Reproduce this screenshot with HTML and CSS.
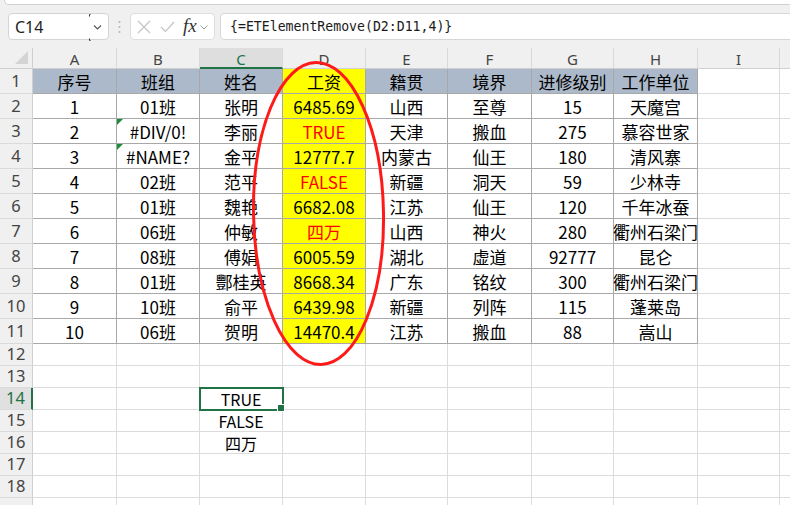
FILE: index.html
```html
<!DOCTYPE html>
<html lang="zh-CN">
<head>
<meta charset="utf-8">
<title>ETElementRemove</title>
<link rel="stylesheet" href="styles.css">
</head>
<body>
<div class="app">
  <div class="topstrip"></div>
  <div class="fbar">
    <div class="namebox">
      <span class="ref">C14</span>
      <span class="nb-drop">
        <svg width="19" height="27" viewBox="0 0 19 27">
          <path d="M1.5 0.5 H0.5 V2.5 M0.5 24.5 V26.5 H1.5" fill="none" stroke="#333" stroke-width="1"/>
          <path d="M5 11.5 L8.5 15 L12 11.5" fill="none" stroke="#555" stroke-width="1.1"/>
        </svg>
      </span>
    </div>
    <div class="sep">
      <svg width="3" height="14" viewBox="0 0 3 14"><circle cx="1.5" cy="2" r="1" fill="#b5b5b5"/><circle cx="1.5" cy="7" r="1" fill="#b5b5b5"/><circle cx="1.5" cy="12" r="1" fill="#b5b5b5"/></svg>
    </div>
    <div class="fxbox">
      <svg class="ic-x" width="14" height="14" viewBox="0 0 14 14"><path d="M1 1 L13 13 M13 1 L1 13" stroke="#c4c4c4" stroke-width="1.2" fill="none"/></svg>
      <svg class="ic-ok" width="15" height="12" viewBox="0 0 15 12"><path d="M1 6 L5.5 10.5 L14 1" stroke="#c4c4c4" stroke-width="1.2" fill="none"/></svg>
      <span class="fx">fx</span>
      <svg class="ic-dd" width="8" height="5" viewBox="0 0 8 5"><path d="M0.5 0.5 L4 4 L7.5 0.5" stroke="#9a9a9a" stroke-width="1" fill="none"/></svg>
    </div>
    <div class="formula">{=ETElementRemove(D2:D11,4)}</div>
  </div>

  <div class="sheet">
    <div class="row hrow">
      <div class="corner"><svg width="14" height="14" viewBox="0 0 14 14"><path d="M13 0 V13 H0 Z" fill="#d4d4d4"/></svg></div>
      <div class="ch">A</div><div class="ch">B</div><div class="ch sel">C</div><div class="ch">D</div><div class="ch">E</div><div class="ch">F</div><div class="ch">G</div><div class="ch">H</div><div class="ch">I</div><div class="ch"></div>
    </div>

    <div class="row r25">
      <div class="rh">1</div>
      <div class="c t hd">序号</div><div class="c t hd">班组</div><div class="c t hd">姓名</div><div class="c t y">工资</div><div class="c t hd">籍贯</div><div class="c t hd">境界</div><div class="c t hd">进修级别</div><div class="c t hd">工作单位</div><div class="c"></div><div class="c"></div>
    </div>
    <div class="row r25">
      <div class="rh">2</div>
      <div class="c t">1</div><div class="c t">01班</div><div class="c t">张明</div><div class="c t y">6485.69</div><div class="c t">山西</div><div class="c t">至尊</div><div class="c t">15</div><div class="c t">天魔宫</div><div class="c"></div><div class="c"></div>
    </div>
    <div class="row r25">
      <div class="rh">3</div>
      <div class="c t">2</div><div class="c t err">#DIV/0!</div><div class="c t">李丽</div><div class="c t y red">TRUE</div><div class="c t">天津</div><div class="c t">搬血</div><div class="c t">275</div><div class="c t">慕容世家</div><div class="c"></div><div class="c"></div>
    </div>
    <div class="row r25">
      <div class="rh">4</div>
      <div class="c t">3</div><div class="c t err">#NAME?</div><div class="c t">金平</div><div class="c t y">12777.7</div><div class="c t">内蒙古</div><div class="c t">仙王</div><div class="c t">180</div><div class="c t">清风寨</div><div class="c"></div><div class="c"></div>
    </div>
    <div class="row r25">
      <div class="rh">5</div>
      <div class="c t">4</div><div class="c t">02班</div><div class="c t">范平</div><div class="c t y red">FALSE</div><div class="c t">新疆</div><div class="c t">洞天</div><div class="c t">59</div><div class="c t">少林寺</div><div class="c"></div><div class="c"></div>
    </div>
    <div class="row r25">
      <div class="rh">6</div>
      <div class="c t">5</div><div class="c t">01班</div><div class="c t">魏艳</div><div class="c t y">6682.08</div><div class="c t">江苏</div><div class="c t">仙王</div><div class="c t">120</div><div class="c t">千年冰蚕</div><div class="c"></div><div class="c"></div>
    </div>
    <div class="row r25">
      <div class="rh">7</div>
      <div class="c t">6</div><div class="c t">06班</div><div class="c t">仲敏</div><div class="c t y red">四万</div><div class="c t">山西</div><div class="c t">神火</div><div class="c t">280</div><div class="c t">衢州石梁门</div><div class="c"></div><div class="c"></div>
    </div>
    <div class="row r25">
      <div class="rh">8</div>
      <div class="c t">7</div><div class="c t">08班</div><div class="c t">傅娟</div><div class="c t y">6005.59</div><div class="c t">湖北</div><div class="c t">虚道</div><div class="c t">92777</div><div class="c t">昆仑</div><div class="c"></div><div class="c"></div>
    </div>
    <div class="row r25">
      <div class="rh">9</div>
      <div class="c t">8</div><div class="c t">01班</div><div class="c t">酆桂英</div><div class="c t y">8668.34</div><div class="c t">广东</div><div class="c t">铭纹</div><div class="c t">300</div><div class="c t">衢州石梁门</div><div class="c"></div><div class="c"></div>
    </div>
    <div class="row r25">
      <div class="rh">10</div>
      <div class="c t">9</div><div class="c t">10班</div><div class="c t">俞平</div><div class="c t y">6439.98</div><div class="c t">新疆</div><div class="c t">列阵</div><div class="c t">115</div><div class="c t">蓬莱岛</div><div class="c"></div><div class="c"></div>
    </div>
    <div class="row r25">
      <div class="rh">11</div>
      <div class="c t">10</div><div class="c t">06班</div><div class="c t">贺明</div><div class="c t y">14470.4</div><div class="c t">江苏</div><div class="c t">搬血</div><div class="c t">88</div><div class="c t">嵩山</div><div class="c"></div><div class="c"></div>
    </div>

    <div class="row r22">
      <div class="rh">12</div>
      <div class="c"></div><div class="c"></div><div class="c"></div><div class="c"></div><div class="c"></div><div class="c"></div><div class="c"></div><div class="c"></div><div class="c"></div><div class="c"></div>
    </div>
    <div class="row r22">
      <div class="rh">13</div>
      <div class="c"></div><div class="c"></div><div class="c"></div><div class="c"></div><div class="c"></div><div class="c"></div><div class="c"></div><div class="c"></div><div class="c"></div><div class="c"></div>
    </div>
    <div class="row r22">
      <div class="rh sel">14</div>
      <div class="c"></div><div class="c"></div><div class="c s active">TRUE</div><div class="c"></div><div class="c"></div><div class="c"></div><div class="c"></div><div class="c"></div><div class="c"></div><div class="c"></div>
    </div>
    <div class="row r22">
      <div class="rh">15</div>
      <div class="c"></div><div class="c"></div><div class="c s">FALSE</div><div class="c"></div><div class="c"></div><div class="c"></div><div class="c"></div><div class="c"></div><div class="c"></div><div class="c"></div>
    </div>
    <div class="row r22">
      <div class="rh">16</div>
      <div class="c"></div><div class="c"></div><div class="c s">四万</div><div class="c"></div><div class="c"></div><div class="c"></div><div class="c"></div><div class="c"></div><div class="c"></div><div class="c"></div>
    </div>
    <div class="row r22">
      <div class="rh">17</div>
      <div class="c"></div><div class="c"></div><div class="c"></div><div class="c"></div><div class="c"></div><div class="c"></div><div class="c"></div><div class="c"></div><div class="c"></div><div class="c"></div>
    </div>
    <div class="row r22">
      <div class="rh">18</div>
      <div class="c"></div><div class="c"></div><div class="c"></div><div class="c"></div><div class="c"></div><div class="c"></div><div class="c"></div><div class="c"></div><div class="c"></div><div class="c"></div>
    </div>
    <div class="row r22">
      <div class="rh"></div>
      <div class="c"></div><div class="c"></div><div class="c"></div><div class="c"></div><div class="c"></div><div class="c"></div><div class="c"></div><div class="c"></div><div class="c"></div><div class="c"></div>
    </div>
  </div>

  <svg class="mark" width="790" height="505" viewBox="0 0 790 505">
    <ellipse cx="318.5" cy="213.5" rx="65" ry="151" transform="rotate(-1 318.5 213.5)" fill="none" stroke="#ff1a1a" stroke-width="3"/>
  </svg>
</div>
</body>
</html>
```

FILE: styles.css
```css
* { box-sizing: border-box; margin: 0; padding: 0; }

html, body {
  width: 790px;
  height: 505px;
  overflow: hidden;
  background: #ffffff;
}

body {
  font-family: "Noto Sans CJK SC", "Noto Sans", sans-serif;
}

.app {
  position: relative;
  width: 790px;
  height: 505px;
  overflow: hidden;
  background: #f0f0f0;
}

/* ---------- formula bar ---------- */
.topstrip {
  height: 5px;
  margin-left: 4px;
  background: #ffffff;
  border-left: 1px solid #d2d2d2;
  border-bottom: 1px solid #d2d2d2;
  border-bottom-left-radius: 6px;
}

.fbar {
  display: flex;
  align-items: center;
  height: 27px;
  margin-top: 8px;
}

.namebox {
  margin-left: 8px;
  width: 101px;
  height: 27px;
  background: #ffffff;
  border: 1px solid #d4d4d4;
  border-radius: 4px;
  display: flex;
  align-items: center;
  justify-content: space-between;
  padding-left: 6px;
}

.ref {
  font-family: "Noto Sans", sans-serif;
  font-size: 16px;
  color: #222;
  line-height: 1;
}

.nb-drop {
  display: flex;
  width: 19px;
  height: 25px;
  margin-top: -1px;
  overflow: visible;
}

.sep {
  display: flex;
  margin-left: 9px;
  width: 3px;
}

.fxbox {
  margin-left: 9px;
  width: 85px;
  height: 27px;
  background: #ffffff;
  border: 1px solid #dedede;
  border-radius: 4px;
  display: flex;
  align-items: center;
  padding-left: 6px;
}

.ic-x { margin-right: 9px; }
.ic-ok { margin-right: 8px; }

.fx {
  font-family: "Liberation Serif", "DejaVu Serif", serif;
  font-style: italic;
  font-size: 19px;
  color: #333;
  line-height: 1;
  margin-top: -3px;
  margin-right: 3px;
}

.ic-dd { margin-top: 1px; }

.formula {
  margin-left: 5px;
  flex: 1 0 auto;
  height: 27px;
  margin-right: -20px;
  background: #ffffff;
  border: 1px solid #d6d6d6;
  border-radius: 4px;
  font-family: "DejaVu Sans Mono", "Liberation Mono", monospace;
  font-size: 13.2px;
  color: #1a1a1a;
  display: flex;
  align-items: center;
  padding-left: 9px;
  white-space: nowrap;
}

/* ---------- sheet ---------- */
.sheet {
  margin-top: 8px;
  background: #ffffff;
}

.row {
  display: grid;
  grid-template-columns: 33px 84px 83px 83px 83px 82px 84px 82px 84px 82px 84px;
}

.hrow { height: 21px; background: #f0f0f0; }
.r25 { height: 25px; }
.r22 { height: 22px; }

.corner {
  background: #f0f0f0;
  border-right: 1px solid #cfcfcf;
  border-bottom: 1px solid #cfcfcf;
  display: flex;
  align-items: flex-end;
  justify-content: flex-end;
  padding: 0 3px 3px 0;
}

.ch {
  background: #f0f0f0;
  border-right: 1px solid #d9d9d9;
  border-bottom: 1px solid #cfcfcf;
  font-family: "Noto Sans", sans-serif;
  font-size: 15px;
  color: #444;
  line-height: 1;
  display: flex;
  align-items: center;
  justify-content: center;
  padding-top: 3px;
}

.ch.sel {
  background: #dedede;
  border-bottom: 2px solid #217346;
  color: #217346;
}

.rh {
  background: #f0f0f0;
  border-right: 1px solid #cfcfcf;
  border-bottom: 1px solid #dadada;
  font-family: "Noto Sans", sans-serif;
  font-size: 16.5px;
  color: #444;
  line-height: 1;
  display: flex;
  align-items: center;
  justify-content: center;
}

.rh.sel {
  background: #e0e0e0;
  border-right: 2px solid #217346;
  color: #217346;
}

.c {
  position: relative;
  border-right: 1px solid #dcdcdc;
  border-bottom: 1px solid #dcdcdc;
  display: flex;
  align-items: center;
  justify-content: center;
  white-space: nowrap;
  font-size: 17px;
  line-height: 1;
  color: #000;
  background: #ffffff;
}

.c.t {
  border-right-color: #a8a8a8;
  border-bottom-color: #a8a8a8;
}

.hd { background: #acb9ca; }
.y { background: #ffff00; }
.red { color: #ff0000; }

.err::before {
  content: "";
  position: absolute;
  left: 0;
  top: 0;
  border-top: 6px solid #1f8b3b;
  border-right: 6px solid transparent;
}

.c.s { font-size: 16px; }

.c.active {
  outline: 2px solid #217346;
  outline-offset: -1px;
  z-index: 2;
}

.c.active::after {
  content: "";
  position: absolute;
  right: -3px;
  bottom: -3px;
  width: 6px;
  height: 6px;
  background: #217346;
  border: 1px solid #ffffff;
}

.mark {
  position: absolute;
  left: 0;
  top: 0;
  pointer-events: none;
  z-index: 5;
}
```
